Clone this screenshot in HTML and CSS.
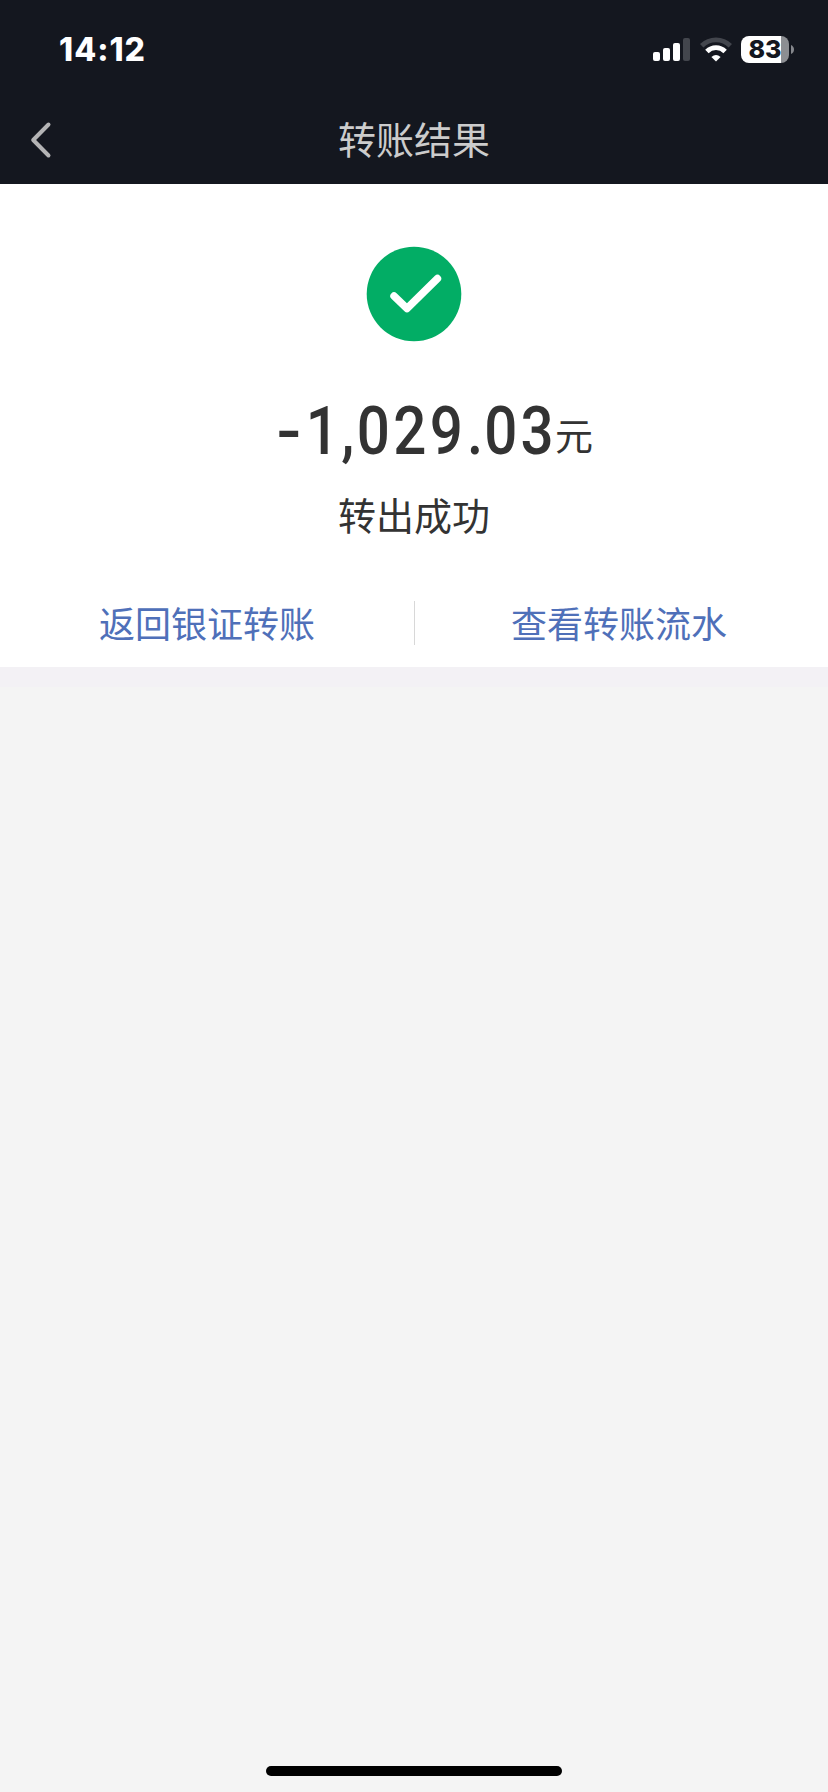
FILE: index.html
```html
<!DOCTYPE html>
<html lang="zh-CN">
<head>
    <meta charset="UTF-8">
    <meta name="viewport" content="width=device-width, initial-scale=1.0">
    <title>转账结果</title>
    <link rel="stylesheet" href="styles.css">
</head>
<body>
    <header class="header">
        <div class="status-bar">
            <span class="time">14:12</span>
            <div class="status-icons">
                <svg class="signal" width="38" height="23" viewBox="0 0 38 23" fill="#fff">
                    <rect x="0" y="14" width="7" height="9" rx="2"/>
                    <rect x="10" y="10" width="7" height="13" rx="2"/>
                    <rect x="20" y="5" width="7" height="18" rx="2"/>
                    <rect x="30" y="0" width="7" height="23" rx="2" fill="#43464d"/>
                </svg>
                <svg class="wifi" width="32" height="25" viewBox="0 0 32 25" fill="none" stroke-width="4.8">
                    <path d="M1.7 8.8A20.2 20.2 0 0 1 30.3 8.8" stroke="#43464d"/>
                    <path d="M6.9 14.5A12.8 12.8 0 0 1 25.1 14.5" stroke="#fff"/>
                    <path d="M16 24.5L11.4 20Q16 15.8 20.6 20Z" fill="#fff"/>
                </svg>
                <div class="battery">
                    <span class="battery-body">83</span>
                    <svg width="3" height="9" viewBox="0 0 3 9"><path d="M0 0Q3 1.5 3 4.5T0 9Z" fill="#85878c"/></svg>
                </div>
            </div>
        </div>
        <nav class="nav-bar">
            <svg class="back" width="24" height="40" viewBox="0 0 24 40" fill="none" stroke="#b4b4b5" stroke-width="4" stroke-linecap="round" stroke-linejoin="round">
                <path d="M20.5 4.5L5.2 20L20.5 35.5"/>
            </svg>
            <h1>转账结果</h1>
        </nav>
    </header>

    <main class="result">
        <svg class="success-icon" width="96" height="96" viewBox="0 0 96 96">
            <circle cx="48" cy="48" r="47.3" fill="#02ad65"/>
            <path d="M28 50L41 62.5L71.5 32.5" fill="none" stroke="#fff" stroke-width="7.4" stroke-linecap="round" stroke-linejoin="round"/>
        </svg>
        <div class="amount">
            <span class="number"><span class="minus">-</span><span class="lead">1</span><span class="mark">,</span>029<span class="mark">.</span>03</span>
            <span class="unit">元</span>
        </div>
        <p class="message">转出成功</p>
        <div class="actions">
            <a>返回银证转账</a>
            <a>查看转账流水</a>
        </div>
    </main>
    <div class="gap"></div>
    <footer class="home-area"><div class="home-indicator"></div></footer>
</body>
</html>
```
FILE: styles.css
```css
* {
    box-sizing: border-box;
}

body {
    margin: 0;
    height: 1792px;
    display: flex;
    flex-direction: column;
    background-color: #f4f4f4;
    font-family: "Noto Sans CJK SC", sans-serif;
    color: #333;
}

.header {
    height: 184px;
    background-color: #14171f;
}

.status-bar {
    height: 99px;
    padding: 0 34px 0 59px;
    display: flex;
    align-items: center;
    justify-content: space-between;
}

.time {
    padding-top: 1px;
    font: 800 32px/40px Inter, sans-serif;
    letter-spacing: 1px;
    color: #fff;
}

.status-icons {
    display: flex;
    align-items: center;
}

.signal {
    margin-right: 9px;
}

.wifi {
    margin-right: 9px;
}

.battery {
    display: flex;
    align-items: center;
    gap: 2px;
}

.battery-body {
    width: 48px;
    height: 27px;
    border-radius: 8px;
    background: linear-gradient(to right, #fff 40px, #8c8e92 40px);
    color: #14171f;
    font: 800 25px/27px Inter, sans-serif;
    text-align: center;
}

.nav-bar {
    height: 80px;
    padding: 0 28px;
    display: grid;
    grid-template-columns: 24px 1fr 24px;
    align-items: center;
}

.back {
    margin-top: 2px;
}

.nav-bar h1 {
    margin: -3px 0 0;
    font-size: 38px;
    font-weight: 400;
    line-height: 56px;
    text-align: center;
    color: #ccc;
}

.result {
    height: 483px;
    padding-top: 62px;
    display: flex;
    flex-direction: column;
    align-items: center;
    background-color: #fff;
}

.amount {
    height: 80px;
    margin-top: 49px;
    padding-left: 40px;
    display: flex;
    align-items: flex-start;
}

/* narrow, evenly spaced figures */
.number {
    width: 280px;
    font: 500 67px/80px Roboto, sans-serif;
    letter-spacing: 3.8px;
    display: flex;
    align-items: baseline;
    transform: scaleX(0.87);
    transform-origin: left;
}

.number span {
    flex: none;
    letter-spacing: 0;
    text-align: center;
}

.number .minus {
    width: 32px;
    transform: scaleX(1.25);
}

.number .lead {
    width: 41.4px;
    text-align: right;
}

.number .mark {
    width: 20.7px;
}

.unit {
    margin-top: 15px;
    font-size: 38px;
    line-height: 56px;
}

.message {
    margin: 15px 0 0;
    font-size: 38px;
    line-height: 56px;
}

.actions {
    width: 100%;
    height: 44px;
    margin-top: 59px;
    display: grid;
    grid-template-columns: 1fr 1fr;
}

.actions a {
    font-size: 36px;
    line-height: 43px;
    text-align: center;
    color: #4f70b9;
}

.actions a + a {
    padding-right: 5px;
    border-left: 1px solid #d8d8d8;
}

.gap {
    height: 20px;
    background-color: #f3f1f5;
}

.home-area {
    margin-top: auto;
    padding-bottom: 16px;
}

.home-indicator {
    width: 296px;
    height: 10px;
    margin: 0 auto;
    border-radius: 5px;
    background-color: #000;
}
```
